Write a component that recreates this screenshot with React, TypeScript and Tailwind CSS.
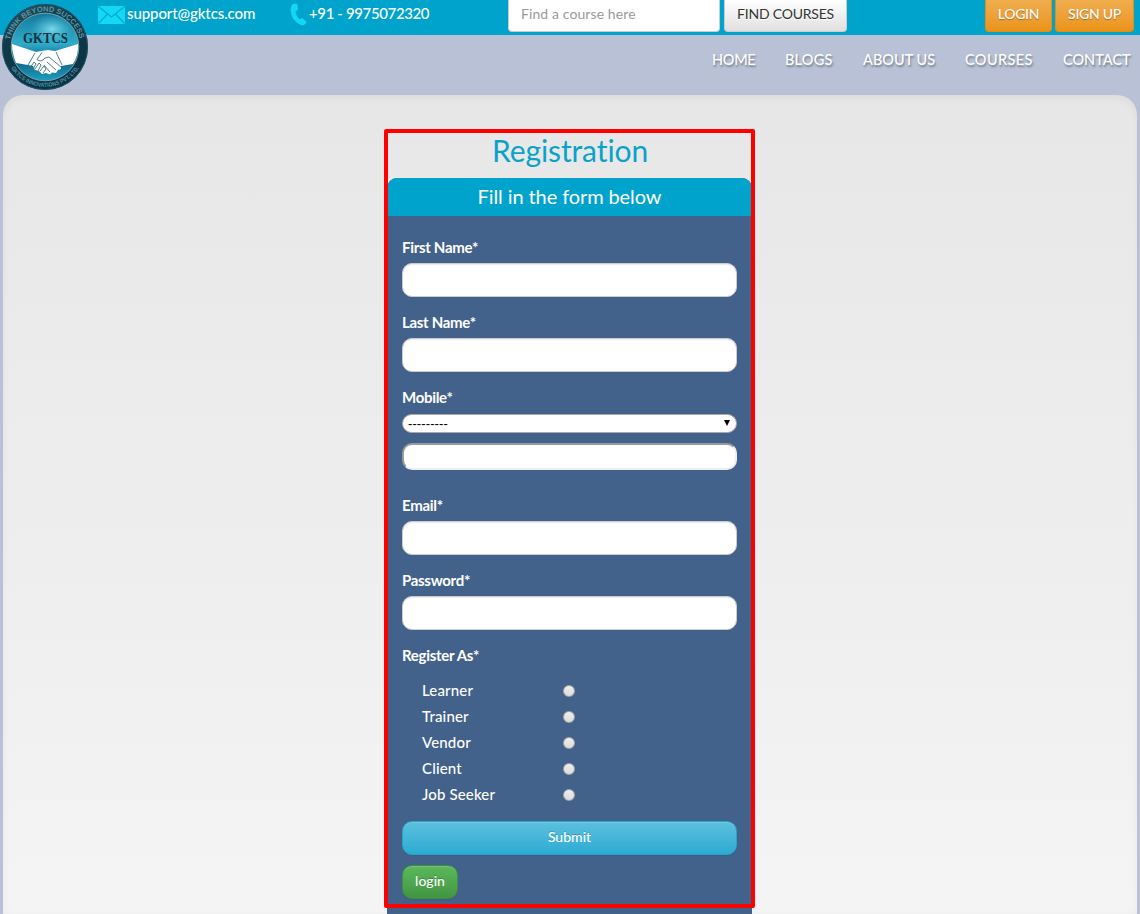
import React from 'react';

const inputClass =
  'block h-[34px] w-full rounded-[10px] border border-[#ccc] bg-white px-3 text-sm text-[#555] shadow-[inset_0_1px_1px_rgba(0,0,0,0.075)] outline-none';

function Logo() {
  return (
    <svg className="absolute left-[1px] top-[3px] z-10" width="88" height="88" viewBox="0 0 88 88">
      <defs>
        <linearGradient id="ring" x1="0" y1="0" x2="0.4" y2="1">
          <stop offset="0" stopColor="#2a5361" />
          <stop offset="0.4" stopColor="#123947" />
          <stop offset="1" stopColor="#0b3344" />
        </linearGradient>
        <linearGradient id="globe" x1="0" y1="0" x2="0" y2="1">
          <stop offset="0" stopColor="#13779a" />
          <stop offset="0.45" stopColor="#2fadcb" />
          <stop offset="0.7" stopColor="#0b6283" />
          <stop offset="1" stopColor="#1f9fc0" />
        </linearGradient>
        <radialGradient id="shine" cx="0.5" cy="0.5" r="0.5">
          <stop offset="0" stopColor="#8be4f2" stopOpacity="0.85" />
          <stop offset="1" stopColor="#4cc4df" stopOpacity="0" />
        </radialGradient>
        <path id="topArc" d="M9.200 37 A35.500 35.500 0 0 1 78.800 37" />
        <path id="bottomArc" d="M10 65 A40 40 0 0 0 78 65" />
      </defs>
      <circle cx="44" cy="44" r="43" fill="url(#ring)" />
      <circle cx="44" cy="44" r="42.500" fill="none" stroke="#1f5365" strokeWidth="1" />
      <circle cx="44" cy="44" r="33.800" fill="url(#globe)" stroke="#6fa5b4" strokeWidth="1" />
      <ellipse cx="51" cy="26" rx="22" ry="15" fill="url(#shine)" />
      <text fontFamily="Liberation Sans, sans-serif" fontSize="7.500" fontWeight="bold" fill="#5599ad">
        <textPath href="#topArc" textLength="96" lengthAdjust="spacingAndGlyphs">THINK BEYOND SUCCESS</textPath>
      </text>
      <text fontFamily="Liberation Sans, sans-serif" fontSize="6" fontWeight="bold" fill="#4b91a7">
        <textPath href="#bottomArc" textLength="81" lengthAdjust="spacingAndGlyphs">GKTCS INNOVATIONS PVT. LTD.</textPath>
      </text>
      <text x="44.500" y="39.500" textAnchor="middle" textLength="45" lengthAdjust="spacingAndGlyphs" fontFamily="Liberation Serif, serif" fontSize="15" fontWeight="bold" fill="#15323c">GKTCS</text>
      <path d="M11 41 L35 49 L40 48 L47 47 L54 48 L77 41 Q77.500 53 72 61 L60 63 L60 66 L57 67 L55 70 L51 69.500 L49 71.500 L45 70 L41 71 L38 68 L34 67 L32 63 L27 62 L15 60 Q11 50 11 41Z" fill="#fff" />
      <path d="M34 50 L27 62 M55 49 L61 62 M41 49.500 L36 56.500 Q40 60 44 55 L48 54 L60 64 M46 59 L55 67 M43 62 L49 69 M29 65 L33 59 L35 61 L32 66 M34 66 L38 60 L40 62 L37 68 M39 68 L43 63 L45 66 L42 70" fill="none" stroke="#3a6f80" strokeWidth="0.900" strokeLinejoin="round" />
    </svg>
  );
}

function TopBar() {
  return (
    <header className="flex h-[35px] bg-[#00a3cc] text-white">
      <div className="flex h-[29px] w-[191px] items-center pl-[98px] text-[15px] font-medium">
        <svg className="mr-[2px] shrink-0" width="27" height="18" viewBox="0 0 27 18">
          <rect width="27" height="18" fill="#12d8f5" />
          <path d="M0.500 0.500 L13.500 11 L26.500 0.500 M0.500 17.500 L9.500 8 M26.500 17.500 L17.500 8" fill="none" stroke="#05a9cf" strokeWidth="1.200" />
        </svg>
        <span className="relative -top-px whitespace-nowrap tracking-[-0.1px]">support@gktcs.com</span>
      </div>
      <div className="ml-[99px] flex h-[29px] w-[218px] items-center text-[15px] font-medium">
        <svg className="mr-[2px] shrink-0" width="17" height="23" viewBox="0 0 17 23">
          <path d="M3 1 L6 .5 Q7 .4 7.300 1.500 L8 6 Q8 7 7 7.500 L5.500 8.500 Q6 13 9.500 16.200 L11.500 15.200 Q12.300 14.800 13 15.500 L16 18.500 Q16.800 19.300 16 20.200 L14 22 Q12.500 23 9 21 Q1.500 16.500 .7 8 Q.4 3 3 1Z" fill="#12d8f5" />
        </svg>
        <span className="relative -top-px whitespace-nowrap tracking-[-0.38px]">+91 - 9975072320</span>
      </div>
      <input
        className="h-[32px] w-[212px] rounded-b-[4px] border border-t-0 border-[#ccc] bg-white px-3 pb-[4px] text-[14px] tracking-[0.1px] outline-none placeholder:text-[#999]"
        placeholder="Find a course here"
      />
      <button className="ml-1 h-[32px] w-[123px] whitespace-nowrap rounded-b-[4px] border border-t-0 border-[#ccc] bg-linear-to-b from-white to-[#e0e0e0] pb-[4px] text-[14px] tracking-[-0.2px] text-[#333] [text-shadow:0_1px_0_#fff]">
        FIND COURSES
      </button>
      <div className="ml-auto mr-[6px] flex gap-[3px] text-[14px] font-medium tracking-[-0.3px]">
        <button className="h-[32px] w-[67px] rounded-b-[4px] border border-t-0 border-[#e38d13] bg-linear-to-b from-[#f0ad4e] to-[#eb9316] pb-[4px] [text-shadow:0_1px_1px_rgba(0,0,0,0.3)]">LOGIN</button>
        <button className="h-[32px] w-[79px] whitespace-nowrap rounded-b-[4px] border border-t-0 border-[#e38d13] bg-linear-to-b from-[#f0ad4e] to-[#eb9316] pb-[4px] [text-shadow:0_1px_1px_rgba(0,0,0,0.3)]">SIGN UP</button>
      </div>
    </header>
  );
}

function Nav() {
  return (
    <nav className="flex h-[60px] justify-end gap-[30px] whitespace-nowrap pr-[10px] pt-[14px] text-[14.5px] font-medium leading-[22px] text-white [text-shadow:1px_2px_2px_rgba(0,0,0,0.35)]">
      <a className="w-[43px] tracking-[-0.3px]">HOME</a>
      <a className="w-[48px] tracking-[0.2px]">BLOGS</a>
      <a className="w-[72px]">ABOUT US</a>
      <a className="w-[68px] tracking-[0.4px]">COURSES</a>
      <a className="w-[67px]">CONTACT</a>
    </nav>
  );
}

function Label({ children }: { children: React.ReactNode }) {
  return <label className="block h-5 text-[15px] font-bold leading-5 tracking-[-0.3px]">{children}</label>;
}

function Field({ label, type = 'text' }: { label: string; type?: string }) {
  return (
    <div className="mb-[15px]">
      <Label>{label}</Label>
      <input type={type} className={inputClass + ' mt-[6px]'} />
    </div>
  );
}

const roles = ['Learner', 'Trainer', 'Vendor', 'Client', 'Job Seeker'];

export default function App() {
  return (
    <div className="relative flex h-[914px] w-[1140px] flex-col overflow-hidden bg-[#b8c1d5] font-['Lato',sans-serif] [font-variant-ligatures:none]">
      <Logo />
      <TopBar />
      <Nav />
      <main className="mx-[3px] h-[819px] rounded-t-[20px] bg-linear-to-b from-[#e7e7e7] to-[#f4f4f4] pt-[34px] shadow-[inset_0_3px_9px_rgba(0,0,0,0.05)]">
        <h1 className="h-[49px] text-center text-[30px] leading-[42px] tracking-[-0.1px] text-[#0aa2cb]">Registration</h1>
        <section className="ml-[384px] h-[760px] w-[365px] overflow-hidden rounded-[10px] bg-[#43628b] text-white">
          <h2 className="h-[38px] bg-[#00a3cc] text-center text-[20px] leading-[36px] tracking-[-0.1px]">Fill in the form below</h2>
          <form className="px-[15px] pt-[21px]" onSubmit={(e) => e.preventDefault()}>
            <Field label="First Name*" />
            <Field label="Last Name*" />
            <div className="mb-[25px]">
              <Label>Mobile*</Label>
              <div className="mt-[7px] flex h-[19px] items-center justify-between rounded-[10px] border border-[#a9a9a9] bg-white pl-[5px] pr-[6px] text-[13px] leading-none text-black">
                <span className="font-['Liberation_Sans',sans-serif] tracking-[0.1px]">---------</span>
                <svg className="relative -top-px" width="6" height="6" viewBox="0 0 6 6">
                  <path d="M0 0H6L3 6Z" fill="#000" />
                </svg>
              </div>
              <input className="mt-[10px] block h-[27px] w-full rounded-[10px] border-2 border-b-[#eee] border-l-[#9a9a9a] border-r-[#eee] border-t-[#9a9a9a] bg-white px-1 text-sm text-black outline-none" />
            </div>
            <Field label="Email*" />
            <Field label="Password*" type="password" />
            <Label>Register As*</Label>
            <div className="mt-[12px] pl-5">
              {roles.map((role) => (
                <label key={role} className="flex h-[26px] items-center text-[15px] font-medium tracking-[0.15px]">
                  <span className="w-[141px]">{role}</span>
                  <input
                    type="radio"
                    name="role"
                    className="mt-[2px] size-3 appearance-none rounded-full border border-[#a5a5a5] bg-linear-to-b from-[#eee] to-[#dcdcdc]"
                  />
                </label>
              ))}
            </div>
            <button className="mt-[14px] block h-[34px] w-full rounded-[10px] border border-[#28a4c9] bg-linear-to-b from-[#5bc0de] to-[#2aabd2] pb-[3px] text-[14px] font-medium shadow-[inset_0_1px_0_rgba(255,255,255,0.15),0_1px_1px_rgba(0,0,0,0.075)] [text-shadow:0_-1px_0_rgba(0,0,0,0.2)]">
              Submit
            </button>
            <button className="mt-[10px] block h-[34px] w-[56px] rounded-[10px] border border-[#3e8f3e] bg-linear-to-b from-[#5cb85c] to-[#419641] pb-[3px] text-[14px] font-medium shadow-[inset_0_1px_0_rgba(255,255,255,0.15),0_1px_1px_rgba(0,0,0,0.075)] [text-shadow:0_-1px_0_rgba(0,0,0,0.2)]">
              login
            </button>
          </form>
        </section>
      </main>
      <div className="pointer-events-none absolute left-[384px] top-[129px] h-[779px] w-[371px] rounded-[2px] border-4 border-[#ff0000]" />
    </div>
  );
}
